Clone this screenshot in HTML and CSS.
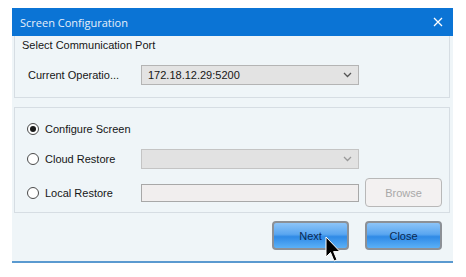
FILE: index.html
```html
<!DOCTYPE html>
<html lang="en">
<head>
  <meta charset="UTF-8">
  <meta name="viewport" content="width=device-width, initial-scale=1.0">
  <title>Screen Configuration</title>
  <link rel="stylesheet" href="styles.css">
</head>
<body>
  <div class="dialog">
    <!-- Title bar -->
    <div class="titlebar">
      <span class="title">Screen Configuration</span>
      <svg class="close-x" width="10" height="10" viewBox="0 0 10 10">
        <path d="M1 1 L9 9 M9 1 L1 9" stroke="#ffffff" stroke-width="1.3" fill="none"/>
      </svg>
    </div>

    <div class="dialog-body">
      <!-- Communication port group -->
      <div class="group group-port">
        <div class="group-title">Select Communication Port</div>
        <div class="row port-row">
          <span class="field-label">Current Operatio...</span>
          <div class="select">
            <span>172.18.12.29:5200</span>
            <svg class="chevron" width="9" height="6" viewBox="0 0 9 6">
              <path d="M1 1 L4.5 4.5 L8 1" stroke="#555" stroke-width="1.3" fill="none"/>
            </svg>
          </div>
        </div>
      </div>

      <!-- Mode group -->
      <div class="group group-mode">
        <div class="row">
          <span class="radio-label"><span class="radio checked"></span>Configure Screen</span>
        </div>
        <div class="row">
          <span class="radio-label"><span class="radio"></span>Cloud Restore</span>
          <div class="select disabled">
            <span></span>
            <svg class="chevron" width="9" height="6" viewBox="0 0 9 6">
              <path d="M1 1 L4.5 4.5 L8 1" stroke="#999" stroke-width="1.3" fill="none"/>
            </svg>
          </div>
        </div>
        <div class="row">
          <span class="radio-label"><span class="radio"></span>Local Restore</span>
          <div class="text-input"></div>
          <button class="btn btn-browse">Browse</button>
        </div>
      </div>

      <div class="actions">
        <button class="btn btn-blue">Next</button>
        <button class="btn btn-blue">Close</button>
      </div>
    </div>
  </div>

  <!-- mouse pointer over the Next button -->
  <svg class="cursor" width="16" height="27" viewBox="0 0 16 27">
    <path d="M1 1 L1 21 L5.5 16.5 L9 25 L12 23.8 L8.6 15.6 L15 15.6 Z" fill="#000" stroke="#fff" stroke-width="1"/>
  </svg>
</body>
</html>
```

FILE: styles.css
```css
body {
  margin: 0;
  padding: 8px 0 0 12px;
  background: #ffffff;
  font-family: "Liberation Sans", Arial, sans-serif;
  font-size: 11px;
  color: #161616;
}

.dialog {
  width: 441px;
  background: #eff5f8;
  border-bottom: 2px solid #5a9ad0;
}

.titlebar {
  height: 28px;
  background: #0b74d5;
  display: flex;
  align-items: center;
  justify-content: space-between;
  padding: 0 10px 0 8px;
}

.title {
  font-family: "Open Sans", sans-serif;
  font-size: 11px;
  color: #e6f0fa;
}

.close-x {
  display: block;
}

.dialog-body {
  padding: 0 3px 11px 2px;
}

.group {
  border: 1px solid #d6dde3;
}

.group-port {
  border-top: none;
  padding: 2px 0 12px 0;
}

.group-title {
  line-height: 14px;
  padding-left: 7px;
  margin-bottom: 13px;
}

.port-row {
  padding-left: 13px;
}

.group-mode {
  margin-top: 9px;
  padding: 11px 7px 5px 12px;
  display: flex;
  flex-direction: column;
  gap: 10px;
}

.group-mode .row:last-child {
  margin-top: -1px;
}

.row {
  display: flex;
  align-items: center;
  min-height: 20px;
}

.field-label {
  width: 113px;
}

.radio-label {
  width: 114px;
  display: flex;
  align-items: center;
}

.radio {
  width: 10px;
  height: 10px;
  border: 1px solid #4a4a4a;
  border-radius: 50%;
  background: #fff;
  margin-right: 6px;
  position: relative;
}

.radio.checked::after {
  content: "";
  position: absolute;
  left: 2px;
  top: 2px;
  width: 6px;
  height: 6px;
  border-radius: 50%;
  background: #1a1a1a;
}

.select {
  width: 218px;
  height: 20px;
  box-sizing: border-box;
  border: 1px solid #b4b4b4;
  background: #e3e3e3;
  display: flex;
  align-items: center;
  justify-content: space-between;
  padding: 0 6px;
}

.select.disabled {
  background: #e2e2e2;
  border-color: #c4c4c4;
}

.chevron {
  display: block;
}

.text-input {
  width: 218px;
  height: 18px;
  box-sizing: border-box;
  border: 1px solid #a8a8a8;
  background: #f1eeee;
}

.btn {
  width: 77px;
  height: 29px;
  box-sizing: border-box;
  border-radius: 4px;
  font-family: "Liberation Sans", Arial, sans-serif;
  font-size: 11px;
  padding: 0;
}

.btn-browse {
  margin-left: 6px;
  border: 1px solid #b8b8b8;
  background: #f3f1f1;
  color: #a8a8a8;
}

.actions {
  display: flex;
  justify-content: flex-end;
  gap: 16px;
  margin-top: 8px;
  padding-right: 8px;
}

.btn-blue {
  border: 2px solid #8c9096;
  color: #0c2a52;
  background: linear-gradient(#8cc4f8 0%, #5aa6f0 45%, #2f8ae6 55%, #5bb0f6 100%);
}

.cursor {
  position: absolute;
  left: 325px;
  top: 236px;
}
```
